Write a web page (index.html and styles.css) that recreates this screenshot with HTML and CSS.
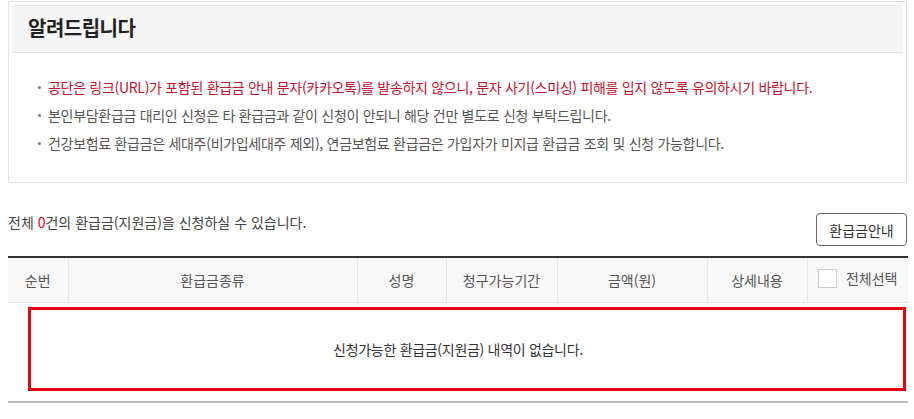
FILE: index.html
```html
<!DOCTYPE html>
<html lang="ko">
<head>
<meta charset="utf-8">
<link rel="stylesheet" href="styles.css">
</head>
<body>
<div class="page">
  <section class="notice">
    <div class="notice-head"><h2>알려드립니다</h2></div>
    <ul class="notice-list">
      <li class="red">공단은 링크(URL)가 포함된 환급금 안내 문자(카카오톡)를 발송하지 않으니, 문자 사기(스미싱) 피해를 입지 않도록 유의하시기 바랍니다.</li>
      <li>본인부담환급금 대리인 신청은 타 환급금과 같이 신청이 안되니 해당 건만 별도로 신청 부탁드립니다.</li>
      <li>건강보험료 환급금은 세대주(비가입세대주 제외), 연금보험료 환급금은 가입자가 미지급 환급금 조회 및 신청 가능합니다.</li>
    </ul>
  </section>

  <div class="summary">
    <p class="count">전체 <em>0</em>건의 환급금(지원금)을 신청하실 수 있습니다.</p>
    <button class="guide-btn">환급금안내</button>
  </div>

  <table class="list">
    <colgroup>
      <col class="c1"><col class="c2"><col class="c3"><col class="c4"><col class="c5"><col class="c6"><col class="c7">
    </colgroup>
    <thead>
      <tr>
        <th>순번</th>
        <th>환급금종류</th>
        <th>성명</th>
        <th>청구가능기간</th>
        <th>금액(원)</th>
        <th>상세내용</th>
        <th><label class="chk"><span class="box"></span>전체선택</label></th>
      </tr>
    </thead>
    <tbody>
      <tr>
        <td colspan="7" class="empty-cell"><div class="empty">신청가능한 환급금(지원금) 내역이 없습니다.</div></td>
      </tr>
    </tbody>
  </table>
</div>
</body>
</html>
```
FILE: styles.css
```css
* { box-sizing: border-box; }
html, body { margin: 0; padding: 0; background: #fff; }
body {
  font-family: "Noto Sans CJK KR", "Noto Sans", sans-serif;
  color: #333;
  font-size: 14px;
}
.page { padding: 1px 7px 0 8px; }

.notice {
  border: 1px solid #e2e2e2;
  height: 182px;
  padding: 3px;
}
.notice-head {
  background: #f5f5f5;
  border-top: 1px solid #ececec;
  border-bottom: 1px solid #e2e2e2;
  height: 48px;
  display: flex;
  align-items: center;
  padding-left: 16px;
  padding-bottom: 3px;
}
.notice-head h2 {
  margin: 0;
  font-size: 20px;
  font-weight: 700;
  color: #222;
  letter-spacing: -0.5px;
}
.notice-list {
  list-style: none;
  margin: 0;
  padding: 20px 0 0 24px;
}
.notice-list li {
  position: relative;
  padding-left: 12px;
  line-height: 28px;
  font-size: 14px;
  color: #555;
  letter-spacing: -0.3px;
}
.notice-list li::before {
  content: "";
  position: absolute;
  left: 2px;
  top: 13px;
  width: 3px;
  height: 3px;
  border-radius: 50%;
  background: #777;
}
.notice-list li.red { color: #c4122f; }

.summary {
  display: flex;
  justify-content: space-between;
  align-items: flex-end;
  margin-top: 29px;
  height: 34px;
}
.count {
  margin: 0;
  font-size: 14px;
  color: #444;
  align-self: flex-start;
  line-height: 20px;
}
.count em { font-style: normal; color: #d7002a; }
.guide-btn {
  font-family: inherit;
  font-size: 14px;
  color: #333;
  background: #fff;
  border: 1px solid #666;
  border-radius: 4px;
  width: 91px;
  height: 33px;
  padding: 0;
}

.list {
  width: 900px;
  margin-top: 10px;
  border-collapse: collapse;
  table-layout: fixed;
  border-top: 2px solid #333;
}
.c1 { width: 60px; }
.c2 { width: 289px; }
.c3 { width: 89px; }
.c4 { width: 111px; }
.c5 { width: 150px; }
.c6 { width: 100px; }
.c7 { width: 101px; }
.list th {
  height: 45px;
  background: #f8f8f8;
  border-left: 1px solid #e6e6e6;
  border-bottom: 1px solid #e6e6e6;
  font-weight: 400;
  font-size: 14px;
  color: #555;
}
.list th:first-child { border-left: 0; }
.chk { display: inline-flex; align-items: center; gap: 9px; }
.chk .box {
  width: 19px;
  height: 19px;
  border: 1px solid #ccc;
  background: #fff;
}
.empty-cell {
  padding: 4px 2px 10px 20px;
  border-bottom: 2px solid #bbb;
}
.empty {
  border: 3px solid #e50012;
  height: 84px;
  display: flex;
  align-items: center;
  justify-content: center;
  padding-right: 18px;
  font-size: 14px;
  color: #333;
  letter-spacing: -0.3px;
}
```
